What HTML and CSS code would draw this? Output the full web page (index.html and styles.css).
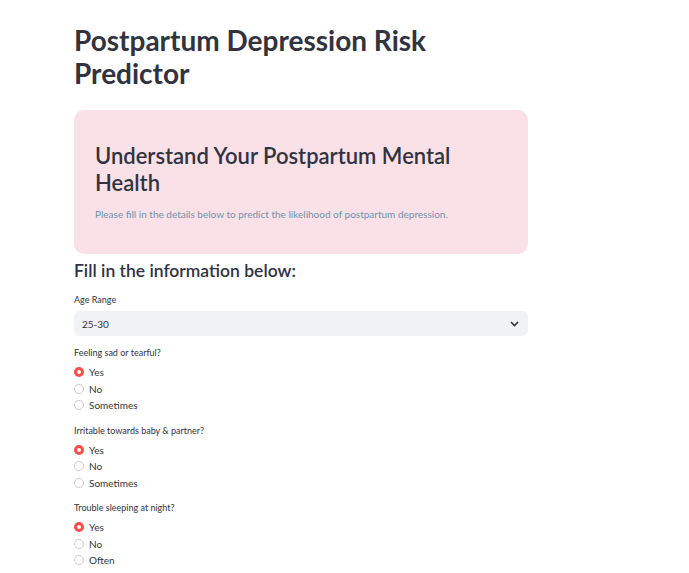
FILE: index.html
```html
<!DOCTYPE html>
<html>
<head>
    <title>Postpartum Depression Risk Predictor</title>
    <link rel="stylesheet" href="styles.css">
</head>
<body>
    <div class="main">
        <h1 class="title">Postpartum Depression Risk Predictor</h1>

        <!-- intro card -->
        <div class="intro">
            <h2>Understand Your Postpartum Mental Health</h2>
            <p>Please fill in the details below to predict the likelihood of postpartum depression.</p>
        </div>

        <h3 class="section">Fill in the information below:</h3>

        <div class="field">
            <label class="field-label">Age Range</label>
            <div class="select">
                <span>25-30</span>
                <svg class="chevron" width="9" height="6" viewBox="0 0 9 6"><path d="M1 1l3.5 3.5L8 1" fill="none" stroke="#31333f" stroke-width="1.6"/></svg>
            </div>
        </div>

        <div class="field">
            <label class="field-label">Feeling sad or tearful?</label>
            <div class="radios">
                <div class="radio checked"><span class="dot"></span>Yes</div>
                <div class="radio"><span class="dot"></span>No</div>
                <div class="radio"><span class="dot"></span>Sometimes</div>
            </div>
        </div>

        <div class="field">
            <label class="field-label">Irritable towards baby &amp; partner?</label>
            <div class="radios">
                <div class="radio checked"><span class="dot"></span>Yes</div>
                <div class="radio"><span class="dot"></span>No</div>
                <div class="radio"><span class="dot"></span>Sometimes</div>
            </div>
        </div>

        <div class="field">
            <label class="field-label">Trouble sleeping at night?</label>
            <div class="radios">
                <div class="radio checked"><span class="dot"></span>Yes</div>
                <div class="radio"><span class="dot"></span>No</div>
                <div class="radio"><span class="dot"></span>Often</div>
            </div>
        </div>
    </div>
</body>
</html>
```

FILE: styles.css
```css
body {
    margin: 0;
    background-color: #ffffff;
    font-family: Lato, "Open Sans", sans-serif;
    color: #31333f;
}

.main {
    width: 454px;
    margin-left: 74px;
    padding-top: 24px;
}

.title {
    margin: 0;
    font-size: 28px;
    line-height: 33px;
    font-weight: 700;
}

.intro {
    margin-top: 20px;
    padding: 32px 21px 33px;
    background-color: #f9e1e7;
    border-radius: 10px;
}

.intro h2 {
    margin: 0;
    font-size: 22px;
    line-height: 27px;
    font-weight: 600;
    width: 380px;
}

.intro p {
    margin: 11px 0 0;
    font-size: 10px;
    line-height: 14px;
    color: #7093ad;
}

.section {
    margin: 6px 0 0;
    font-size: 17.5px;
    line-height: 22px;
    font-weight: 600;
}

.field {
    margin-top: 12px;
}

.field + .field {
    margin-top: 11px;
}

.field-label {
    display: block;
    font-size: 9px;
    line-height: 12px;
    margin-bottom: 5px;
}

.select {
    display: flex;
    align-items: center;
    justify-content: space-between;
    height: 25px;
    padding: 0 9px 0 8px;
    background-color: #f0f2f6;
    border-radius: 6px;
    font-size: 10px;
}

.radio {
    display: flex;
    align-items: center;
    gap: 5px;
    height: 16.5px;
    font-size: 10px;
}

.dot {
    box-sizing: border-box;
    width: 10px;
    height: 10px;
    border-radius: 50%;
    border: 1px solid #c9cbd1;
    background-color: #ffffff;
}

.radio.checked .dot {
    border: 3px solid #ff4b4b;
}
```
